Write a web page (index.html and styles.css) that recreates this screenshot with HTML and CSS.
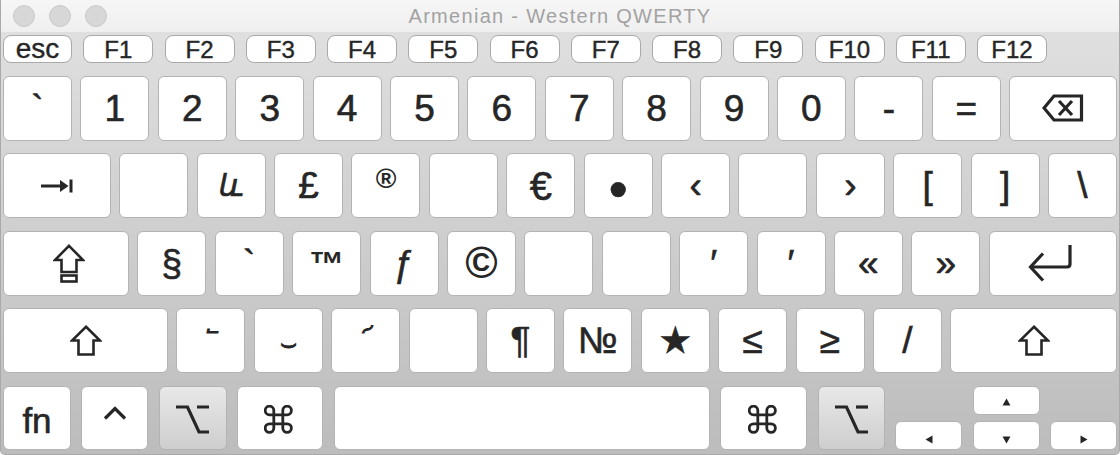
FILE: index.html
```html
<!DOCTYPE html>
<html lang="en">
<head>
    <meta charset="UTF-8">
    <title>Keyboard Viewer</title>
    <link rel="stylesheet" href="styles.css">
</head>
<body>
    <div class="window">
        <div class="titlebar">
            <div class="lights">
                <span class="light"></span>
                <span class="light"></span>
                <span class="light"></span>
            </div>
            <div class="title">Armenian - Western QWERTY</div>
            <div></div>
        </div>

        <div class="keyboard">
            <div class="row frow">
                <div class="fkey esc">esc</div>
                <div class="fkey">F1</div>
                <div class="fkey">F2</div>
                <div class="fkey">F3</div>
                <div class="fkey">F4</div>
                <div class="fkey">F5</div>
                <div class="fkey">F6</div>
                <div class="fkey">F7</div>
                <div class="fkey">F8</div>
                <div class="fkey">F9</div>
                <div class="fkey">F10</div>
                <div class="fkey">F11</div>
                <div class="fkey">F12</div>
            </div>

            <div class="row">
                <div class="key">`</div>
                <div class="key">1</div>
                <div class="key">2</div>
                <div class="key">3</div>
                <div class="key">4</div>
                <div class="key">5</div>
                <div class="key">6</div>
                <div class="key">7</div>
                <div class="key">8</div>
                <div class="key">9</div>
                <div class="key">0</div>
                <div class="key">-</div>
                <div class="key">=</div>
                <div class="key grow">
                    <svg class="icon" width="42" height="28" viewBox="0 0 42 28">
                        <path d="M2 14 L12 2 H39.5 V26 H12 Z" fill="none" stroke="#262626" stroke-width="3.2" stroke-linejoin="miter"/>
                        <path d="M17 7 L30 21 M30 7 L17 21" stroke="#262626" stroke-width="3.2"/>
                    </svg>
                </div>
            </div>

            <div class="row">
                <div class="key grow">
                    <svg class="icon" width="34" height="14" viewBox="0 0 34 14">
                        <rect x="1" y="5.5" width="21" height="3" fill="#262626"/>
                        <path d="M20 1 L28.5 7 L20 13 Z" fill="#262626"/>
                        <rect x="29.5" y="0.5" width="3" height="13" fill="#262626"/>
                    </svg>
                </div>
                <div class="key"></div>
                <div class="key arm">և</div>
                <div class="key">£</div>
                <div class="key reg">®</div>
                <div class="key"></div>
                <div class="key euro">€</div>
                <div class="key bullet">•</div>
                <div class="key">‹</div>
                <div class="key"></div>
                <div class="key">›</div>
                <div class="key">[</div>
                <div class="key">]</div>
                <div class="key">\</div>
            </div>

            <div class="row">
                <div class="key caps">
                    <svg class="icon" width="32" height="39" viewBox="0 0 32 39">
                        <path d="M16 1.8 L30 16 H23.5 V28 H8.5 V16 H2 Z" fill="none" stroke="#262626" stroke-width="2.6" stroke-linejoin="miter"/>
                        <rect x="8.5" y="31.5" width="15" height="6" fill="none" stroke="#262626" stroke-width="2.6"/>
                    </svg>
                </div>
                <div class="key">§</div>
                <div class="key">`</div>
                <div class="key tm">™</div>
                <div class="key">ƒ</div>
                <div class="key copy">©</div>
                <div class="key"></div>
                <div class="key"></div>
                <div class="key">′</div>
                <div class="key">′</div>
                <div class="key">«</div>
                <div class="key">»</div>
                <div class="key grow">
                    <svg class="icon ret" width="46" height="39" viewBox="0 0 46 39">
                        <path d="M43 1 V20 Q43 23 40 23 H4" fill="none" stroke="#262626" stroke-width="3.2"/>
                        <path d="M16 9.5 L3.5 23 L16 36.5" fill="none" stroke="#262626" stroke-width="3.2"/>
                    </svg>
                </div>
            </div>

            <div class="row">
                <div class="key shift">
                    <svg class="icon" width="32" height="31" viewBox="0 0 32 31">
                        <path d="M16 1.8 L30 15.5 H23.5 V29.5 H8.5 V15.5 H2 Z" fill="none" stroke="#262626" stroke-width="2.6" stroke-linejoin="miter"/>
                    </svg>
                </div>
                <div class="key arm small">՟</div>
                <div class="key small low">⌣</div>
                <div class="key arm small">՜</div>
                <div class="key"></div>
                <div class="key">¶</div>
                <div class="key">№</div>
                <div class="key">★</div>
                <div class="key">≤</div>
                <div class="key">≥</div>
                <div class="key">/</div>
                <div class="key grow">
                    <svg class="icon" width="32" height="31" viewBox="0 0 32 31">
                        <path d="M16 1.8 L30 15.5 H23.5 V29.5 H8.5 V15.5 H2 Z" fill="none" stroke="#262626" stroke-width="2.6" stroke-linejoin="miter"/>
                    </svg>
                </div>
            </div>

            <div class="row bottom">
                <div class="key fn">fn</div>
                <div class="key ctrl">
                    <svg class="icon" width="24" height="14" viewBox="0 0 24 14">
                        <path d="M2 12.5 L12 2.5 L22 12.5" fill="none" stroke="#262626" stroke-width="3.2"/>
                    </svg>
                </div>
                <div class="key opt">
                    <svg class="icon" width="35" height="31" viewBox="0 0 35 31">
                        <path d="M1 3 H12.5 L24 28 H34" fill="none" stroke="#262626" stroke-width="3.2"/>
                        <path d="M22 3 H34" fill="none" stroke="#262626" stroke-width="3.2"/>
                    </svg>
                </div>
                <div class="key cmd">
                    <svg class="icon" width="29" height="29" viewBox="0 0 29 29">
                        <path d="M9.8 9.8 V5.5 A4.3 4.3 0 1 0 5.5 9.8 H23.1 A4.3 4.3 0 1 0 18.8 5.5 V23.1 A4.3 4.3 0 1 0 23.1 18.8 H5.5 A4.3 4.3 0 1 0 9.8 23.1 Z" fill="none" stroke="#262626" stroke-width="2.8"/>
                    </svg>
                </div>
                <div class="key grow"></div>
                <div class="key cmd rcmd">
                    <svg class="icon" width="29" height="29" viewBox="0 0 29 29">
                        <path d="M9.8 9.8 V5.5 A4.3 4.3 0 1 0 5.5 9.8 H23.1 A4.3 4.3 0 1 0 18.8 5.5 V23.1 A4.3 4.3 0 1 0 23.1 18.8 H5.5 A4.3 4.3 0 1 0 9.8 23.1 Z" fill="none" stroke="#262626" stroke-width="2.8"/>
                    </svg>
                </div>
                <div class="key opt ropt">
                    <svg class="icon" width="35" height="31" viewBox="0 0 35 31">
                        <path d="M1 3 H12.5 L24 28 H34" fill="none" stroke="#262626" stroke-width="3.2"/>
                        <path d="M22 3 H34" fill="none" stroke="#262626" stroke-width="3.2"/>
                    </svg>
                </div>
                <div class="arrows">
                    <div class="key arrow up">
                        <svg class="icon" width="9" height="8" viewBox="0 0 9 8"><path d="M4.5 0.5 L8.5 7.5 H0.5 Z" fill="#262626"/></svg>
                    </div>
                    <div class="key arrow left">
                        <svg class="icon" width="8" height="9" viewBox="0 0 8 9"><path d="M0.5 4.5 L7.5 0.5 V8.5 Z" fill="#262626"/></svg>
                    </div>
                    <div class="key arrow down">
                        <svg class="icon" width="9" height="8" viewBox="0 0 9 8"><path d="M0.5 0.5 H8.5 L4.5 7.5 Z" fill="#262626"/></svg>
                    </div>
                    <div class="key arrow right">
                        <svg class="icon" width="8" height="9" viewBox="0 0 8 9"><path d="M7.5 4.5 L0.5 0.5 V8.5 Z" fill="#262626"/></svg>
                    </div>
                </div>
            </div>
        </div>
    </div>
</body>
</html>
```

FILE: styles.css
```css
* {
    box-sizing: border-box;
}
body {
    margin: 0;
    font-family: 'Liberation Sans', 'DejaVu Sans', sans-serif;
    color: #262626;
    background-color: #fff;
    overflow: hidden;
}
.window {
    width: 1120px;
    height: 455px;
    display: flex;
    flex-direction: column;
    border: 1px solid #a9a9a9;
    border-top: none;
    border-radius: 0 0 5px 5px;
    overflow: hidden;
    background: linear-gradient(#e2e2e2, #bcbcbc);
}
.titlebar {
    height: 32px;
    flex: none;
    display: grid;
    grid-template-columns: 1fr auto 1fr;
    align-items: center;
    background: linear-gradient(#f6f6f6, #efefef);
}
.lights {
    display: flex;
    gap: 14px;
    padding-left: 12px;
}
.light {
    width: 22px;
    height: 22px;
    border-radius: 50%;
    background-color: #d7d7d7;
    border: 1px solid #c9c9c9;
}
.title {
    font-size: 20px;
    color: #a2a2a2;
    letter-spacing: 1.3px;
}
.keyboard {
    flex: 1;
    display: flex;
    flex-direction: column;
    gap: 12.6px;
    padding: 3px 2px 0;
}
.row {
    display: flex;
    gap: 8.4px;
    height: 65px;
    flex: none;
}
.frow {
    height: 28px;
    gap: 11.25px;
}
.fkey {
    width: 70px;
    flex: none;
    display: flex;
    align-items: center;
    justify-content: center;
    background-color: #fff;
    border: 1px solid #a9a9a9;
    border-radius: 8px;
    font-size: 24px;
    line-height: 1;
    padding-top: 2px;
    -webkit-text-stroke: 0.4px #262626;
}
.fkey.esc {
    width: 69px;
    font-size: 28px;
    padding-top: 0;
}
.key {
    width: 69px;
    flex: none;
    display: flex;
    align-items: center;
    justify-content: center;
    background-color: #fff;
    border: 1px solid #b3b3b3;
    border-radius: 6px;
    font-size: 37px;
    line-height: 1;
    -webkit-text-stroke: 0.6px #262626;
}
.key.grow {
    flex: 1;
    width: auto;
}
.icon {
    display: block;
}
.key.arm {
    font-size: 31px;
    font-style: italic;
}
.key.small {
    font-size: 26px;
    -webkit-text-stroke: 1px #262626;
}
.key.low {
    padding-top: 6px;
}
.key.reg {
    font-size: 28px;
    font-weight: bold;
    padding-bottom: 13px;
    -webkit-text-stroke: 0;
}
.key.euro {
    font-size: 40px;
}
.key.bullet {
    font-size: 54px;
    padding-top: 6px;
}
.key.tm {
    font-weight: bold;
    font-size: 35px;
    -webkit-text-stroke: 0;
}
.key.copy {
    font-size: 44px;
    font-weight: bold;
    -webkit-text-stroke: 0;
}
.key.caps {
    width: 126px;
    padding-left: 5px;
}
.key.shift {
    width: 165px;
}
.ret {
    margin-left: -5px;
}
.bottom {
    height: 64px;
    gap: 10.3px;
}
.key.fn {
    width: 68px;
    font-size: 35px;
    padding-top: 6px;
}
.key.ctrl {
    width: 67px;
    padding-bottom: 9px;
}
.key.opt {
    width: 68px;
    background: linear-gradient(#e8e8e8, #cecece);
    padding-top: 3px;
}
.key.ropt {
    width: 67px;
}
.key.cmd {
    width: 86.5px;
    padding-top: 4px;
    padding-right: 3px;
}
.key.rcmd {
    width: 87px;
}
.arrows {
    width: 222px;
    flex: none;
    display: grid;
    grid-template-columns: repeat(3, 67px);
    grid-template-rows: 1fr 1fr;
    column-gap: 10.5px;
    row-gap: 6.6px;
}
.key.arrow {
    width: auto;
    align-items: flex-end;
    padding-bottom: 5px;
}
.key.arrow.up {
    grid-column: 2;
    grid-row: 1;
    align-items: center;
    padding: 3px 0 0;
}
.key.arrow.left {
    grid-column: 1;
    grid-row: 2;
}
.key.arrow.down {
    grid-column: 2;
    grid-row: 2;
}
.key.arrow.right {
    grid-column: 3;
    grid-row: 2;
}
```
